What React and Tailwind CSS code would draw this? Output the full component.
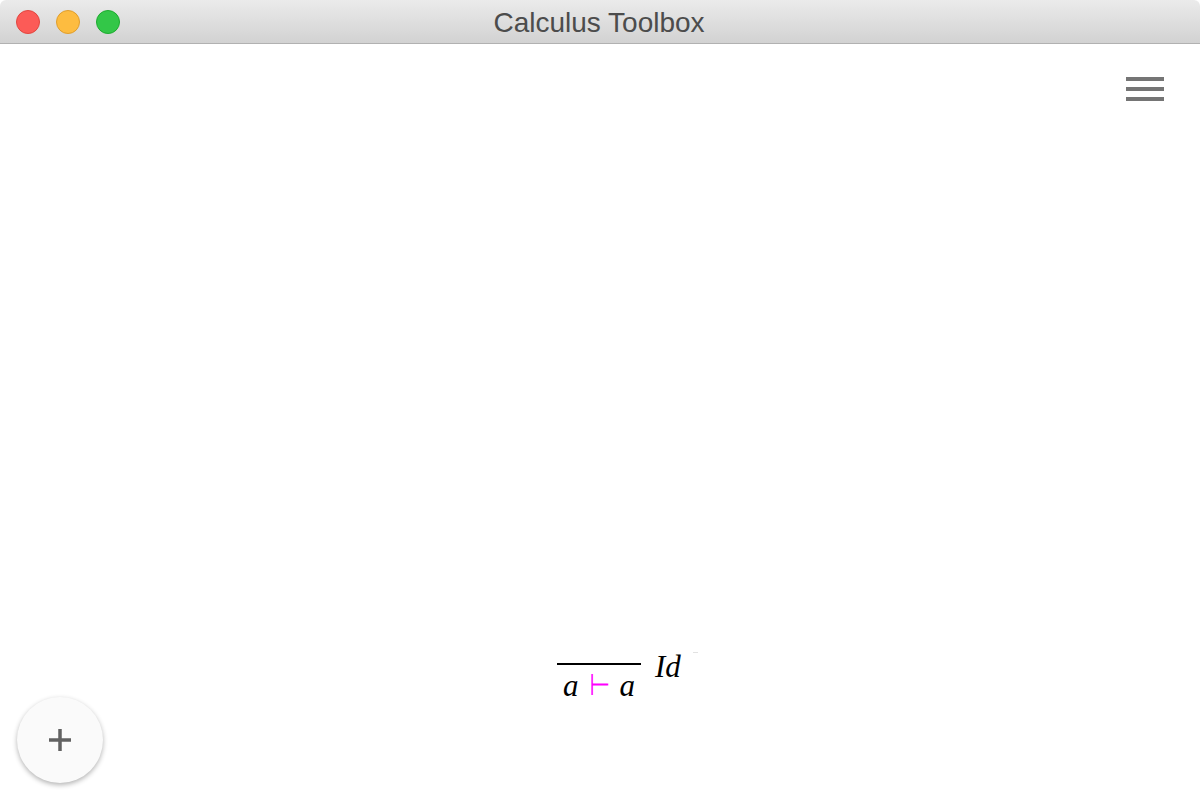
const TrafficLight = ({ color, border }) => (
    <div className={`w-6 h-6 rounded-full border ${color} ${border}`}></div>
)

const App = () => {
    return (
        <div className="relative h-screen flex flex-col bg-white overflow-hidden font-['Liberation_Sans',sans-serif]">
            <div className="relative h-11 shrink-0 flex items-center justify-center rounded-t-md border-b border-[#b1b1b1] bg-gradient-to-b from-[#ebebeb] to-[#d2d2d2]">
                <div className="absolute left-4 top-[10px] flex gap-4">
                    <TrafficLight color="bg-[#fc5b57]" border="border-[#e2463f]" />
                    <TrafficLight color="bg-[#fdbc40]" border="border-[#e09e2c]" />
                    <TrafficLight color="bg-[#33c748]" border="border-[#1dab2f]" />
                </div>
                <span className="pt-[2px] pr-[2px] text-[28px] leading-none text-[#4c4c4c]">Calculus Toolbox</span>
            </div>

            <div className="flex-1 flex flex-col">
                <div className="flex justify-end pt-[33px] pr-[36px]">
                    <div className="w-[38px] flex flex-col gap-[6px]">
                        <div className="h-1 bg-[#757575]"></div>
                        <div className="h-1 bg-[#757575]"></div>
                        <div className="h-1 bg-[#757575]"></div>
                    </div>
                </div>

                <div className="mt-auto mb-[95px] flex justify-center font-['Liberation_Serif',serif] text-black">
                    <div className="relative w-[84px] mr-[2px] border-t-2 border-black">
                        <div className="flex items-center justify-center gap-[11px] h-[40px] text-[31px] italic leading-none">
                            <span>a</span>
                            <span className="w-[19px] text-center not-italic text-[#ff00ff] font-['DejaVu_Sans',sans-serif] text-[24px] scale-y-125">⊢</span>
                            <span>a</span>
                        </div>
                        <span className="absolute left-[98px] top-[-14px] text-[31px] italic leading-none">Id</span>
                        <div className="absolute left-[136px] top-[-13px] w-[5px] h-px bg-[#e2e2e2]"></div>
                    </div>
                </div>
            </div>

            <button className="absolute left-[17px] bottom-[17px] w-[86px] h-[86px] rounded-full bg-[#fafafa] flex items-center justify-center shadow-[0_2px_5px_rgba(0,0,0,0.3)]">
                <svg width="24" height="24" viewBox="0 0 24 24">
                    <path d="M1 12h22M12 1v22" stroke="#616161" strokeWidth="3.5" fill="none" />
                </svg>
            </button>
        </div>
    )
}

export default App
